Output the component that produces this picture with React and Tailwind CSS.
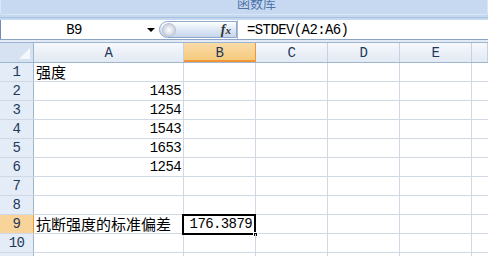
import React from "react";

const mono = "font-['Liberation_Mono','DejaVu_Sans_Mono',monospace] tracking-[-0.6px]";
const cjk = "font-['Noto_Sans_CJK_SC','Noto_Sans',sans-serif]";

const cols = [
  { key: "A", w: "w-[150px]" },
  { key: "B", w: "w-[72px]" },
  { key: "C", w: "w-[72px]" },
  { key: "D", w: "w-[72px]" },
  { key: "E", w: "w-[72px]" },
  { key: "F", w: "flex-1" },
];

const rows = [
  { n: 1, a: "强度", aCjk: true },
  { n: 2, a: "1435" },
  { n: 3, a: "1254" },
  { n: 4, a: "1543" },
  { n: 5, a: "1653" },
  { n: 6, a: "1254" },
  { n: 7 },
  { n: 8 },
  { n: 9, a: "抗断强度的标准偏差", aCjk: true, b: "176.3879" },
  { n: 10 },
  { n: null },
];

const FormulaBar = () => (
  <div className="flex h-[19px] border-l border-[#6f8db5] bg-white">
    {/* name box */}
    <div className="relative flex w-[158px] items-center">
      <span className={`${mono} w-full pr-[12px] text-center text-[14px] leading-none text-black`}>
        B9
      </span>
      <span className="absolute left-[146px] top-[8px] h-0 w-0 border-x-[4px] border-t-[4px] border-x-transparent border-t-black" />
    </div>
    {/* fx pill */}
    <div className="relative my-[1px] flex w-[78px] items-center justify-end rounded-l-full border border-[#8ea9cc] bg-gradient-to-b from-[#fdfeff] via-[#dfe8f5] to-[#c6d6ec] pr-[5px]">
      <span className="absolute left-[2px] top-[1px] h-[14px] w-[14px] rounded-full border border-[#b4c4d8] bg-radial from-[#ffffff] to-[#b9c2cd]" />
      <span className="font-['Liberation_Serif',serif] text-[14px] font-bold italic leading-none text-[#333]">
        f<span className="text-[11px]">x</span>
      </span>
    </div>
    <div className="w-px bg-[#a9bad0]" />
    <div className="flex flex-1 items-center pl-[9px]">
      <span className={`${mono} text-[14px] leading-none text-black`}>=STDEV(A2:A6)</span>
    </div>
  </div>
);

const Ribbon = () => (
  <div className="h-[20px] bg-[#c4d8f0]">
    <div className="relative h-[15px] overflow-hidden rounded-b-[3px] border-x border-b border-[#d9e6f6] bg-[#c6d9f1]">
      <span className={`${cjk} absolute left-[236px] top-[-4px] text-[13px] leading-none text-[#4e73a8]`}>
        函数库
      </span>
    </div>
    <div className="mt-[2px] h-px bg-[#a8c0de]" />
  </div>
);

const HeaderRow = () => (
  <div className="flex h-[20px] border-b border-[#9eb6ce]">
    <div className="relative w-[34px] border-r border-[#9eb6ce] bg-[#d6e2f2]">
      <span className="absolute bottom-[3px] right-[3px] h-0 w-0 border-b-[11px] border-l-[11px] border-b-[#f4f7fb] border-l-transparent" />
    </div>
    {cols.map((c) => {
      const sel = c.key === "B";
      return (
        <div
          key={c.key}
          className={`${c.w} flex items-center justify-center border-r ${
            sel
              ? "border-[#f29536] bg-gradient-to-b from-[#f9dba6] to-[#f5c97a] shadow-[inset_0_-2px_0_#f29536]"
              : "border-[#c5d2e3] bg-gradient-to-b from-[#f6f8fc] to-[#e2e9f3]"
          }`}
        >
          {c.key !== "F" && (
            <span className={`${mono} text-[14px] leading-none text-[#1e395b]`}>{c.key}</span>
          )}
        </div>
      );
    })}
  </div>
);

const GridRow = ({ r }) => {
  const sel = r.n === 9;
  return (
    <div className="flex h-[19px] border-b border-[#d0d7e5]">
      <div
        className={`flex w-[34px] items-end justify-center pb-[2px] ${
          sel
            ? "border-r border-[#f29536] bg-[#f8d39a]"
            : "border-r border-[#9eb6ce] bg-[#e4ecf7]"
        }`}
      >
        {r.n && <span className={`${mono} text-[14px] leading-none text-[#1e395b]`}>{r.n}</span>}
      </div>
      <div
        className={`flex w-[150px] items-end border-r border-[#d0d7e5] pb-[1px] ${
          r.aCjk ? "justify-start pl-[2px]" : "justify-end pr-[2px]"
        }`}
      >
        {r.a && (
          <span
            className={`${r.aCjk ? `${cjk} text-[15px] leading-[17px]` : `${mono} pb-[1px] text-[14px] leading-none`} whitespace-nowrap text-black`}
          >
            {r.a}
          </span>
        )}
      </div>
      <div className="relative flex w-[72px] items-end justify-end border-r border-[#d0d7e5] pb-[2px] pr-[3px]">
        {r.b && (
          <>
            <span className={`${mono} text-[14px] leading-none text-black`}>{r.b}</span>
            <span className="absolute -left-[2px] -top-[1px] -right-[1px] -bottom-[2px] border-[2.5px] border-black" />
            <span className="absolute -bottom-[4px] -right-[3px] h-[5px] w-[5px] border border-white bg-black" />
          </>
        )}
      </div>
      <div className="w-[72px] border-r border-[#d0d7e5]" />
      <div className="w-[72px] border-r border-[#d0d7e5]" />
      <div className="w-[72px] border-r border-[#d0d7e5]" />
      <div className="flex-1" />
    </div>
  );
};

export default function App() {
  return (
    <div className="h-[256px] w-[488px] overflow-hidden bg-white">
      <Ribbon />
      <FormulaBar />
      <div className="h-px bg-[#8aa4c6]" />
      <div className="h-[2px] bg-[#e3ebf6]" />
      <div className="h-px bg-[#9fb4d0]" />
      <HeaderRow />
      {rows.map((r, i) => (
        <GridRow key={i} r={r} />
      ))}
    </div>
  );
}
